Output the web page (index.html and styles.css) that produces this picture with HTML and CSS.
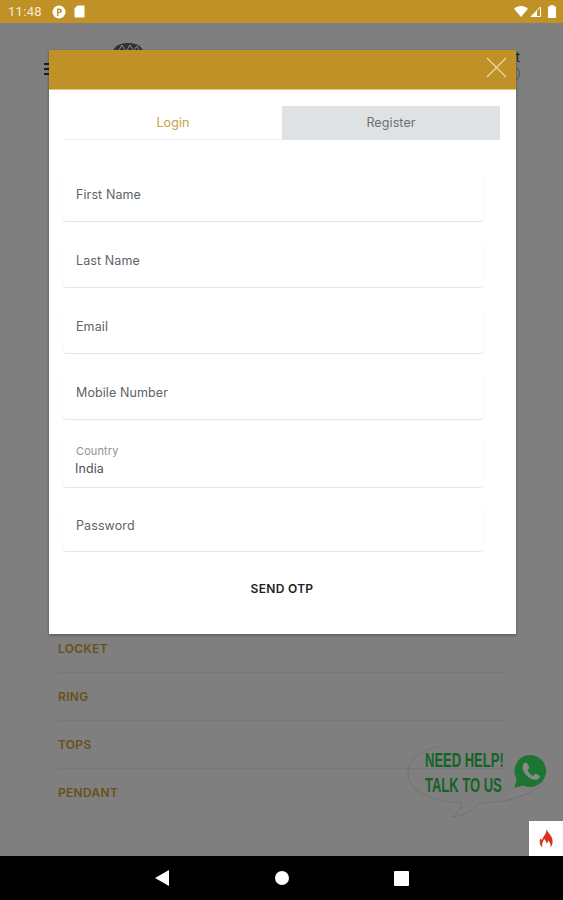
FILE: index.html
```html
<!DOCTYPE html>
<html lang="en">
<head>
<meta charset="utf-8">
<title>Register</title>
<link rel="stylesheet" href="styles.css">
</head>
<body>
<div class="screen">
  <header class="status">
    <div class="status-left">
      <span class="clock">11:48</span>
      <svg class="st-icon" width="14" height="14" viewBox="0 0 14 14"><circle cx="7" cy="7" r="6.5" fill="#fff"/><path d="M5 3.500h2.600a2.300 2.300 0 0 1 0 4.600H6.400V11H5z" fill="#c09126"/><path d="M6.400 5h1.100a.9.900 0 0 1 0 1.700H6.400z" fill="#fff"/></svg>
      <svg class="st-icon" width="11" height="13" viewBox="0 0 11 13"><path d="M3.500 0.500H9.500a1 1 0 0 1 1 1v10a1 1 0 0 1-1 1h-8a1 1 0 0 1-1-1V3.600z" fill="#fff"/></svg>
    </div>
    <div class="status-right">
      <svg class="st-wifi" width="14" height="11" viewBox="0 0 14 11"><path d="M0 2.800C4-.9 10-.9 14 2.800L7 11z" fill="#fff"/></svg>
      <svg class="st-signal" width="11" height="11" viewBox="0 0 11 11"><path d="M10.500 1v9.500H1z" fill="none" stroke="#fff" stroke-width="1"/><path d="M7 4.500V11H0.800z" fill="#fff"/></svg>
      <svg width="8" height="13" viewBox="0 0 8 13"><path d="M2.500 0h3v1.200H7a1 1 0 0 1 1 1V12a1 1 0 0 1-1 1H1a1 1 0 0 1-1-1V2.200a1 1 0 0 1 1-1h1.500z" fill="#fff"/></svg>
    </div>
  </header>

  <main class="page">
    <div class="topbar">
      <span class="burger"><i></i><i></i><i></i></span>
      <svg class="logo" width="30" height="8" viewBox="0 0 30 8"><path d="M0 8C2 2 8 0 15 0s13 2 15 8z" fill="#333"/><path d="M6 7l3-5 3 5M14 7l3-5 3 5M21 7l3-4 2 4" stroke="#8a8a8a" fill="none"/></svg>
      <span class="acct">Account</span>
      <span class="acct-arc"></span>
    </div>

    <ul class="cats">
      <li>LOCKET</li>
      <li>RING</li>
      <li>TOPS</li>
      <li>PENDANT</li>
    </ul>

    <section class="modal">
      <div class="modal-head">
        <svg class="close" width="21" height="21" viewBox="0 0 21 21"><path d="M1 1l19 19M20 1L1 20" stroke="#f0d79a" stroke-width="1.300" fill="none"/></svg>
      </div>
      <div class="modal-body">
        <div class="tabs">
          <div class="tab tab-on">Login</div>
          <div class="tab tab-off">Register</div>
        </div>
        <form class="fields">
          <div class="field">First Name</div>
          <div class="field">Last Name</div>
          <div class="field">Email</div>
          <div class="field">Mobile Number</div>
          <div class="field field-select">
            <span class="mini">Country</span>
            <span class="val">India</span>
          </div>
          <div class="field field-last">Password</div>
        </form>
        <div class="send">SEND OTP</div>
      </div>
    </section>

    <aside class="help">
      <svg class="bubble" width="140" height="84" viewBox="0 0 140 84"><path d="M32 2C14 4 1 14 1 28c0 16 18 27 44 29 4 0 7 0 10 1-1 6-5 11-10 14 12-1 21-6 26-14 30 0 56-8 66-22" fill="none" stroke="#727272" stroke-width="1"/></svg>
      <div class="help-text"><span>NEED HELP!</span><span>TALK TO US</span></div>
      <svg class="wa" width="35" height="35" viewBox="0 0 35 35"><path d="M17.500 1a16 16 0 0 0-13.700 24.200L1.300 33.700l8.800-2.300A16 16 0 1 0 17.500 1z" fill="#1c7530"/><path d="M12.500 8.500c-1 0-3 1.700-3 4.700 0 5 6.500 12.500 13 12.500 2.800 0 4.500-2.200 4.500-3.500 0-.6-4-2.800-4.600-2.500-.7.300-1.400 2-2.200 2-1.400 0-5.400-3.700-5.600-5.500 0-.8 1.600-1.500 1.700-2.200 0-.7-1.800-5.500-3.800-5.500z" fill="#8a8a8a"/></svg>
    </aside>

    <div class="fire">
      <svg width="16" height="20" viewBox="0 0 16 20"><path d="M8.500 0c.5 3 4 5 5.500 9 1.300 3.500.5 7-1.500 9.500.5-3-.5-5.500-2.500-7 0 1.500-.7 2.500-1.500 3-.2-2-1.200-3.500-2.500-4.500-.2 2-2.800 4-1.500 8.500C2 16.500.8 13 2.500 9.500 3.200 10 3.700 10.500 4 11.500 4.500 7.500 9 5 8.500 0z" fill="#d8321c"/></svg>
    </div>
  </main>

  <nav class="navbar">
    <svg width="14" height="16" viewBox="0 0 14 16"><path d="M14 0v16L0 8z" fill="#fff"/></svg>
    <span class="nav-home"></span>
    <span class="nav-recent"></span>
  </nav>
</div>
</body>
</html>
```

FILE: styles.css
```css
* { box-sizing: border-box; }
html, body { margin: 0; padding: 0; }
body { font-family: Inter, "Liberation Sans", sans-serif; }

.screen {
  width: 563px;
  height: 900px;
  display: flex;
  flex-direction: column;
  overflow: hidden;
  background: #7f7f7f;
}

.status {
  height: 23px;
  background: #c09126;
  color: #fff;
  display: flex;
  justify-content: space-between;
  align-items: center;
  padding: 0 7px 0 8px;
  flex: none;
}
.status-left, .status-right { display: flex; align-items: center; }
.clock {
  font: 13px Roboto, sans-serif;
  letter-spacing: 0.3px;
  color: #f5ead0;
  margin-right: 10px;
}
.status-left .st-icon { margin-right: 8px; }
.st-wifi { margin-right: 2px; }
.st-signal { margin-right: 7px; }

.page {
  position: relative;
  flex: 1;
  padding: 0 0 0 58px;
}

.topbar { position: relative; height: 27px; }
.burger {
  position: absolute;
  left: -14px;
  top: 40px;
  display: flex;
  flex-direction: column;
  gap: 3px;
}
.burger i { display: block; width: 6px; height: 2px; background: #1c1c1c; }
.logo { position: absolute; left: 55px; top: 20px; }
.acct {
  position: absolute;
  right: 43px;
  top: 26px;
  font-size: 13px;
  line-height: 16px;
  color: #1c1c1c;
}
.acct-arc {
  position: absolute;
  left: 451px;
  top: 44px;
  width: 11px;
  height: 13px;
  border: 1px solid #555;
  border-radius: 50%;
}

.cats {
  list-style: none;
  margin: 0;
  padding: 0;
  position: absolute;
  left: 58px;
  top: 602px;
  width: 446px;
}
.cats li {
  height: 48px;
  font-size: 12px;
  font-weight: 600;
  line-height: 48px;
  letter-spacing: 0.3px;
  color: #665216;
  border-bottom: 1px solid #787878;
}
.cats li:last-child { border-bottom: 0; }

.modal {
  position: absolute;
  left: 49px;
  top: 27px;
  width: 467px;
  height: 584px;
  background: #fff;
  box-shadow: 0 1px 3px rgba(0,0,0,.35);
}
.modal-head {
  height: 40px;
  background: #c09126;
  border-bottom: 1px solid #e3c77f;
  position: relative;
}
.close { position: absolute; right: 9px; top: 7px; }

.modal-body { padding: 16px 15px 0 14px; }
.tabs {
  display: flex;
  height: 34px;
  margin-left: 1px;
}
.tab {
  width: 218px;
  text-align: center;
  font-size: 12.500px;
  line-height: 33px;
  letter-spacing: 0.1px;
}
.tab-on { color: #c8a047; border-bottom: 1px solid #f0f0f0; }
.tab-off { color: #6c6f72; background: #dee2e5; }

.fields {
  margin-top: 35px;
  width: 421px;
  display: flex;
  flex-direction: column;
  gap: 20px;
}
.field {
  height: 46px;
  padding: 12px 13px 0;
  font-size: 12.500px;
  line-height: 16px;
  letter-spacing: 0.1px;
  color: #606366;
  background: #fff;
  border-radius: 4px;
  box-shadow: 0 1px 1px rgba(0,0,0,.1), 0 0 2px rgba(0,0,0,.03);
}
.field-select {
  height: 48px;
  margin-bottom: -2px;
  padding: 5px 12px 0;
  display: flex;
  flex-direction: column;
}
.field-last { padding-top: 13px; }
.mini { font-size: 11px; line-height: 14px; color: #909395; padding-left: 1px; }
.val { font-size: 12.500px; line-height: 21px; color: #505355; }

.send {
  margin-top: 30px;
  text-align: center;
  font-size: 12px;
  font-weight: 600;
  line-height: 16px;
  letter-spacing: 0.3px;
  color: #222;
}

.help { position: absolute; left: 407px; top: 722px; width: 140px; height: 84px; }
.bubble { position: absolute; left: 0; top: 0; }
.help-text {
  position: absolute;
  left: 18px;
  top: 3px;
  display: flex;
  flex-direction: column;
  font: bold 20px/25px "Liberation Sans", sans-serif;
  color: #146326;
  transform: scaleX(.65);
  transform-origin: left top;
  white-space: nowrap;
}
.wa { position: absolute; left: 106px; top: 9px; }

.fire {
  position: absolute;
  right: 0;
  bottom: 0;
  width: 34px;
  height: 35px;
  background: #fff;
  display: flex;
  align-items: center;
  justify-content: center;
}

.navbar {
  height: 44px;
  flex: none;
  background: #000;
  display: flex;
  align-items: center;
  padding-left: 155px;
}
.nav-home { width: 14px; height: 14px; margin-left: 106px; border-radius: 50%; background: #fff; }
.nav-recent { width: 15px; height: 15px; margin-left: 105px; border-radius: 1px; background: #fff; }
```
